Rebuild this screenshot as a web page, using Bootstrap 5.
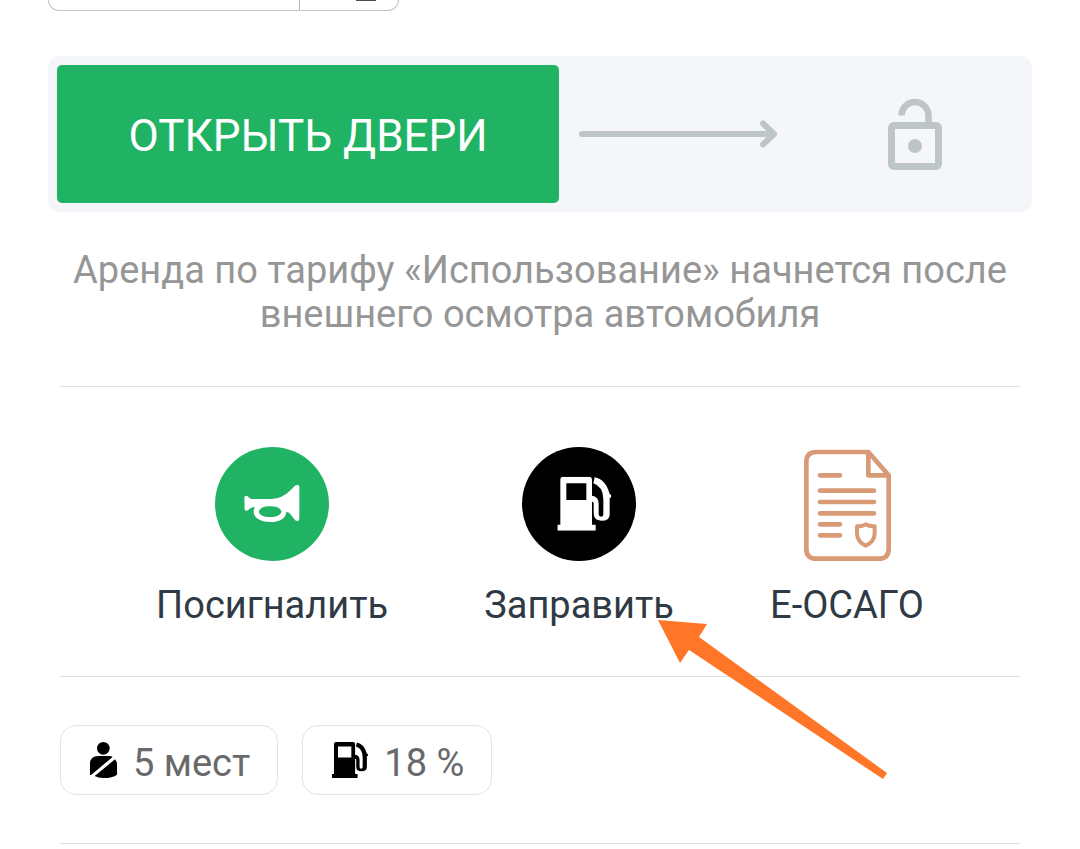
<!DOCTYPE html>
<html lang="ru">
<head>
<meta charset="utf-8">
<meta name="viewport" content="width=device-width, initial-scale=1">
<title>Аренда автомобиля</title>
<link href="https://cdn.jsdelivr.net/npm/bootstrap@5.3.0/dist/css/bootstrap.min.css" rel="stylesheet">
<style>
  body { font-family: Roboto, "Noto Sans", sans-serif; background: #fff; font-size: 38px; line-height: 44px; overflow-x: hidden; }
  .screen { padding: 0 48px; }
  .plate { width: 351px; height: 11px; border: 1px solid #c4c4c6; border-top: 0; border-radius: 0 0 14px 14px; }
  .plate-region { width: 99px; border-left: 1px solid #b4b4b6; }
  .plate-flag { width: 20px; height: 1px; background: #54474c; margin-left: 8px; }
  .slider { margin-top: 45px; padding: 9px; background: #f4f6fa; border-radius: 10px; }
  .btn-open { width: 52%; height: 138px; padding: 4px 0 0; background: #21b364; color: #fff; font-size: 44px; line-height: 52px; border: 0; border-radius: 5px; }
  .btn-open:hover, .btn-open:active { background: #1da35a !important; color: #fff !important; }
  .track { padding: 0 81px 0 20px; color: #bec5c9; }
  .note { color: #969696; margin: 36px 0 50px; }
  .inner { padding: 0 12px; }
  .rule { margin: 0; border-top: 1px solid #dfe0e1; opacity: 1; }
  .actions { padding: 60px 0 49px; }
  .action { padding: 0; border: 0; background: none; color: #2f3a44; line-height: 44px; }
  .action svg.pic { width: 114px; height: 114px; margin-bottom: 22px; }
  .pointer { position: absolute; left: calc(100% - 16px); top: 172px; width: 230px; height: 160px; pointer-events: none; }
  .chips { padding: 48px 0; gap: 24px; }
  .chip { height: 70px; padding: 0 27px 0 29px; gap: 16px; border: 1px solid #e3e3e4; border-radius: 16px; color: #69696b; }
  .chip span { padding-top: 6px; }
</style>
</head>
<body>
<svg width="0" height="0" class="position-absolute" aria-hidden="true">
  <symbol id="pump" viewBox="0 0 162 162">
    <path fill="currentColor" fill-rule="evenodd" d="M9 144V9Q9 0 18 0H94Q104 0 104 10V57Q124 60 124 80V113Q124 120 131 120Q138 120 138 112V68Q138 30 108 20L112 2Q145 8 157 52L162 55V62L157 64V114Q157 132 132 132Q109 132 109 110V80Q109 75 104 75V144H115V162H0V144ZM27 20V70H87V20Z"/>
  </symbol>
</svg>
<main class="screen">
  <div class="plate d-flex justify-content-end">
    <div class="plate-region ps-5"><div class="plate-flag"></div></div>
  </div>

  <section class="slider d-flex align-items-center">
    <button type="button" class="btn btn-open">ОТКРЫТЬ ДВЕРИ</button>
    <div class="track d-flex flex-grow-1 align-items-center justify-content-between">
      <svg width="200" height="30" viewBox="0 0 200 30" fill="none" stroke="currentColor" stroke-width="6" stroke-linecap="round" stroke-linejoin="round" aria-hidden="true"><path d="M3 15H194M184 4.500L195 15L184 25.500"/></svg>
      <svg width="54" height="72" viewBox="0 0 54 72" aria-hidden="true"><path fill="none" stroke="currentColor" stroke-width="6.500" d="M13.500 17.500A13.500 13.500 0 0 1 40.500 17.500V27"/><rect x="3.500" y="27.500" width="47" height="41" rx="2.500" fill="none" stroke="currentColor" stroke-width="7"/><circle cx="27" cy="48" r="7" fill="currentColor"/></svg>
    </div>
  </section>

  <div class="inner">
    <p class="note text-center">Аренда по тарифу «Использование» начнется после внешнего осмотра автомобиля</p>
    <hr class="rule">

    <div class="actions d-flex justify-content-evenly">
      <button type="button" class="action d-flex flex-column align-items-center">
        <svg class="pic" viewBox="42 36 342 342" aria-hidden="true"><circle cx="213" cy="207" r="171" fill="#21b364"/><path fill="#fff" fill-rule="evenodd" d="M130 188Q130 182 136 182Q140 182 143 187L150 192H212Q244 190 266 168L281 153Q285 149 291 150Q295 151 295 156V251Q295 258 289 258Q283 258 280 253L268 237Q263 231 256 230C255 248 238 261 209 261C178 261 158 249 158 230Q158 222 162 216Q151 217 146 221L141 226Q136 229 131 225ZM207 214C187 214 174 221 174 230S187 246 207 246S241 239 241 230S228 214 207 214Z"/></svg>
        <span>Посигналить</span>
      </button>
      <button type="button" class="action position-relative d-flex flex-column align-items-center">
        <svg class="pic" viewBox="42 36 342 342" aria-hidden="true"><circle cx="213" cy="207" r="171" fill="#000"/><use href="#pump" x="148" y="125" width="162" height="162" color="#fff"/></svg>
        <span>Заправить</span>
        <svg class="pointer" viewBox="0 0 230 160" aria-hidden="true"><path fill="#ff7628" d="M0 1L49 5L41 18L229 154L225 160L31 31L22 44Z"/></svg>
      </button>
      <button type="button" class="action d-flex flex-column align-items-center">
        <svg class="pic" viewBox="27 36 342 342" fill="none" stroke="#d99b76" stroke-width="14" stroke-linecap="round" stroke-linejoin="round" aria-hidden="true"><path d="M262 51H106Q76 51 76 81V341Q76 371 106 371H293Q323 371 323 341V121ZM262 51V121H323M117 121H177M117 167H279M117 201H279M117 235H279M117 268H177M117 301H177"/><path stroke-width="12" d="M254 268Q243 275 228 274V296Q229 321 254 332Q280 321 281 296V274Q266 275 254 268Z"/></svg>
        <span>Е-ОСАГО</span>
      </button>
    </div>
    <hr class="rule">

    <div class="chips d-flex">
      <div class="chip d-flex align-items-center">
        <svg width="27" height="36" viewBox="0 0 81 108" aria-hidden="true"><circle cx="40" cy="19" r="19"/><path d="M0 98V66Q0 42 25 42H58Q64 42 68 45L4 98Q2 100 0 98ZM14 102L75 52Q81 59 81 67V98Q68 108 40 108Q24 108 14 102Z"/></svg>
        <span>5 мест</span>
      </div>
      <div class="chip d-flex align-items-center">
        <svg width="36" height="36" color="#000" aria-hidden="true"><use href="#pump" width="36" height="36"/></svg>
        <span>18 %</span>
      </div>
    </div>
    <hr class="rule">
  </div>
</main>
<script src="https://cdn.jsdelivr.net/npm/bootstrap@5.3.0/dist/js/bootstrap.bundle.min.js"></script>
</body>
</html>
